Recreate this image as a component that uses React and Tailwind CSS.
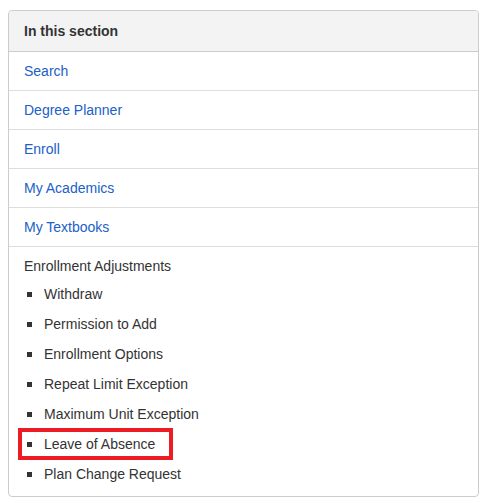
import React from "react";

const links = ["Search", "Degree Planner", "Enroll", "My Academics", "My Textbooks"];

const adjustments = [
  "Withdraw",
  "Permission to Add",
  "Enrollment Options",
  "Repeat Limit Exception",
  "Maximum Unit Exception",
  "Leave of Absence",
  "Plan Change Request",
];

export default function App() {
  return (
    <div className="min-h-screen bg-white pt-[10px] pl-[8px] pr-[10px] font-['Liberation_Sans',Arial,sans-serif] text-[14px]">
      <div className="w-[471px] rounded-[4px] border border-[#cccccc] overflow-hidden">
        <div className="h-[41px] flex items-center px-[15px] bg-[#f3f3f3] border-b border-[#cccccc] font-bold text-[#333333]">
          In this section
        </div>
        {links.map((label, i) => (
          <a
            key={label}
            href="#"
            className={`block px-[15px] py-[9px] leading-[20px] text-[#2060c8] ${i > 0 ? "border-t border-[#dddddd]" : ""}`}
          >
            {label}
          </a>
        ))}
        <div className="border-t border-[#dddddd] px-[15px] pt-[9px] pb-[7px] text-[#333333]">
          <div className="leading-[20px]">Enrollment Adjustments</div>
          <ul className="mt-[3px]">
            {adjustments.map((label) => (
              <li key={label} className="relative flex items-center h-[30px] pl-[20px]">
                <span className="absolute left-[3px] top-[13px] w-[5px] h-[5px] bg-[#333333]" />
                <span className="leading-[20px]">{label}</span>
                {label === "Leave of Absence" ? (
                  <span className="absolute left-[-6px] top-[-1px] w-[155px] h-[32px] border-[4px] border-[#ed1c24]" />
                ) : null}
              </li>
            ))}
          </ul>
        </div>
      </div>
    </div>
  );
}
